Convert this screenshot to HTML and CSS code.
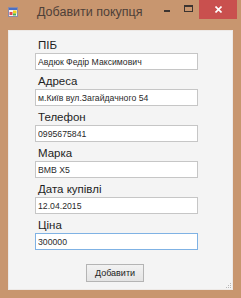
FILE: index.html
```html
<!DOCTYPE html>
<html lang="uk">
<head>
<meta charset="utf-8">
<title>Добавити покупця</title>
<link rel="stylesheet" href="styles.css">
</head>
<body>
<div class="window">
  <div class="titlebar">
    <svg class="app-icon" width="10" height="10" viewBox="0 0 10 10">
      <rect x="0.5" y="0.5" width="9" height="9" fill="#f4f4f4" stroke="#8a8aa8"/>
      <rect x="1" y="1" width="8" height="2" fill="#4a6fc4"/>
      <rect x="5" y="3.5" width="3.5" height="3" fill="#f2d21c"/>
      <rect x="1.5" y="5" width="3" height="3" fill="#e0454f"/>
      <rect x="5" y="6.5" width="3" height="2" fill="#4cb04c"/>
    </svg>
    <span class="title">Добавити покупця</span>
    <div class="caption-btns">
      <span class="cap cap-min"><span class="min-glyph"></span></span>
      <span class="cap cap-max"><span class="max-glyph"></span></span>
      <span class="cap cap-close">
        <svg width="7" height="7" viewBox="0 0 7 7"><path d="M0.5 0.5 L6.5 6.5 M6.5 0.5 L0.5 6.5" stroke="#fff" stroke-width="1.6"/></svg>
      </span>
    </div>
  </div>
  <div class="client">
    <div class="fields">
      <div class="field"><span class="label">ПІБ</span><input class="textbox" type="text" value="Авдюк Федір Максимович"></div>
      <div class="field"><span class="label">Адреса</span><input class="textbox" type="text" value="м.Київ вул.Загайдачного 54"></div>
      <div class="field"><span class="label">Телефон</span><input class="textbox" type="text" value="0995675841"></div>
      <div class="field"><span class="label">Марка</span><input class="textbox" type="text" value="BMB X5"></div>
      <div class="field"><span class="label">Дата купівлі</span><input class="textbox" type="text" value="12.04.2015"></div>
      <div class="field"><span class="label">Ціна</span><input class="textbox focused" type="text" value="300000"></div>
    </div>
    <div class="actions"><button class="btn" type="button">Добавити</button></div>
    <svg class="grip" width="7" height="7" viewBox="0 0 7 7">
      <rect x="5" y="1" width="1" height="1" fill="#b8b8b8"/>
      <rect x="3" y="3" width="1" height="1" fill="#b8b8b8"/>
      <rect x="5" y="3" width="1" height="1" fill="#b8b8b8"/>
      <rect x="1" y="5" width="1" height="1" fill="#b8b8b8"/>
      <rect x="3" y="5" width="1" height="1" fill="#b8b8b8"/>
      <rect x="5" y="5" width="1" height="1" fill="#b8b8b8"/>
    </svg>
  </div>
</div>
</body>
</html>
```
FILE: styles.css
```css
html, body {
  margin: 0;
  padding: 0;
  background: #ffffff;
}

.window {
  width: 241px;
  height: 298px;
  box-sizing: border-box;
  background: #c8966f;
  display: flex;
  flex-direction: column;
  font-family: "Liberation Sans", Arial, sans-serif;
  overflow: hidden;
}

.titlebar {
  height: 30px;
  flex: none;
  display: flex;
  align-items: flex-start;
}

.app-icon {
  margin: 7px 0 0 8px;
  flex: none;
}

.title {
  margin: 5px 0 0 19px;
  font-size: 12.5px;
  line-height: 15px;
  color: #4e4038;
  white-space: nowrap;
}

.caption-btns {
  margin-left: auto;
  margin-right: 4px;
  display: flex;
}

.cap {
  height: 19px;
  display: flex;
  align-items: center;
  justify-content: center;
}

.cap-min { width: 23px; }
.cap-max { width: 21px; }
.cap-close {
  width: 38px;
  background: #c9504e;
}

.min-glyph {
  width: 6px;
  height: 2px;
  margin-top: 3px;
  background: #3c3430;
}

.max-glyph {
  width: 9px;
  height: 7px;
  box-sizing: border-box;
  border: 1px solid #3c3430;
  border-top-width: 2px;
  margin-top: -2px;
}

.client {
  position: relative;
  flex: 1;
  margin: 0 8px 8px 8px;
  background: #f4f4f4;
  box-shadow: inset 0 0 0 1px #ede9e6;
  padding: 8px 0 0 27px;
}

.fields {
  display: flex;
  flex-direction: column;
  gap: 4px;
  width: 163px;
}

.field {
  display: flex;
  flex-direction: column;
}

.label {
  padding-left: 3px;
  font-size: 11.5px;
  line-height: 14px;
  color: #1e1e1e;
  margin-bottom: 1px;
}

.textbox {
  display: block;
  box-sizing: border-box;
  width: 163px;
  height: 17px;
  margin: 0;
  padding: 0 2px;
  border: 1px solid #c6c6c6;
  background: #ffffff;
  font-family: "Liberation Sans", Arial, sans-serif;
  font-size: 8.7px;
  color: #2a2a2a;
  outline: none;
}

.textbox.focused {
  border-color: #7fb2e4;
}

.actions {
  margin-top: 14px;
  padding-left: 51px;
}

.btn {
  display: block;
  box-sizing: border-box;
  width: 58px;
  height: 18px;
  margin: 0;
  padding: 0;
  border: 1px solid #b4b4b4;
  background: linear-gradient(#f2f2f2, #e4e4e4);
  font-family: "Liberation Sans", Arial, sans-serif;
  font-size: 9px;
  color: #222;
}

.grip {
  position: absolute;
  right: 1px;
  bottom: 1px;
}
```
